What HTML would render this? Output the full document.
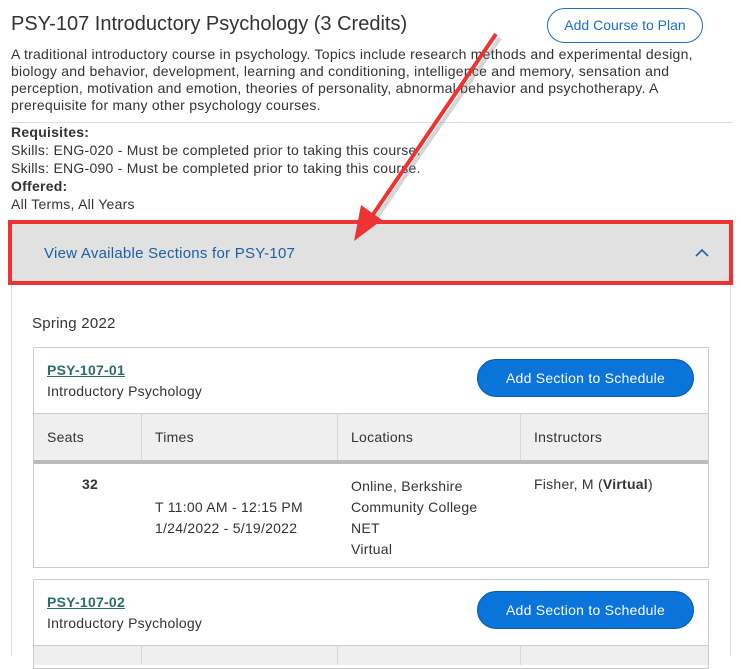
<!DOCTYPE html>
<html><head><meta charset="utf-8"><style>
*{margin:0;padding:0;box-sizing:border-box}
body{width:741px;height:656px;overflow:hidden;background:#fff;font-family:"Liberation Sans",sans-serif;color:#333;position:relative;font-size:14px;letter-spacing:0.25px}
.a{position:absolute;white-space:nowrap}
.btn{position:absolute;border-radius:20px;background:#0a74da;color:#fff;font-size:14px;text-align:center;border:1px solid #0659b0}
.lnk{color:#2a6e6a;font-weight:bold;text-decoration:underline;font-size:14px}
.th{position:absolute;background:#efefef;border-top:1px solid #ccc}
.vl{position:absolute;width:1px;background:#d6d6d6}
</style></head><body>
<div class="a" style="left:11px;top:13px;font-size:20px;color:#333;letter-spacing:0">PSY-107 Introductory Psychology (3 Credits)</div>
<div class="a" style="left:547px;top:8px;width:156px;height:35px;border:1px solid #1a6fc9;border-radius:18px;color:#1a6fc9;text-align:center;line-height:33px;font-size:14px;letter-spacing:0">Add Course to Plan</div>
<div class="a" style="left:11px;top:46px;line-height:17px;font-size:14px">A traditional introductory course in psychology. Topics include research methods and experimental design,<br>biology and behavior, development, learning and conditioning, intelligence and memory, sensation and<br>perception, motivation and emotion, theories of personality, abnormal behavior and psychotherapy. A<br>prerequisite for many other psychology courses.</div>
<div class="a" style="left:11px;top:122px;width:722px;height:1px;background:#ddd"></div>
<div class="a" style="left:11px;top:123px;line-height:18px;font-size:14px"><b>Requisites:</b><br>Skills: ENG-020 - Must be completed prior to taking this course.<br>Skills: ENG-090 - Must be completed prior to taking this course.<br><b>Offered:</b><br>All Terms, All Years</div>
<div class="a" style="left:11px;top:280px;width:720px;height:376px;border-left:1px solid #ddd;border-right:1px solid #ddd"></div>
<div class="a" style="left:8px;top:220px;width:725px;height:65px;border:4px solid #ee3333;background:#e1e1e1"></div>
<div class="a" style="left:44px;top:245px;font-size:15px;color:#1a5fa8">View Available Sections for PSY-107</div>
<svg class="a" style="left:694px;top:247px" width="16" height="12"><path d="M2 9 L8 3 L14 9" fill="none" stroke="#1a5fa8" stroke-width="1.6"/></svg>
<div class="a" style="left:32px;top:315px;font-size:15px">Spring 2022</div>

<div class="a" style="left:33px;top:347px;width:676px;height:221px;border:1px solid #ccc"></div>
<div class="a lnk" style="left:47px;top:362px">PSY-107-01</div>
<div class="a" style="left:47px;top:383px">Introductory Psychology</div>
<div class="btn" style="left:477px;top:359px;width:217px;height:38px;line-height:36px">Add Section to Schedule</div>
<div class="th" style="left:34px;top:413px;width:674px;height:47px"></div>
<div class="a" style="left:34px;top:460px;width:674px;height:4px;background:#bbb"></div>
<div class="vl" style="left:141px;top:413px;height:47px"></div>
<div class="vl" style="left:337px;top:413px;height:47px"></div>
<div class="vl" style="left:520px;top:413px;height:47px"></div>
<div class="a" style="left:47px;top:429px">Seats</div>
<div class="a" style="left:155px;top:429px">Times</div>
<div class="a" style="left:351px;top:429px">Locations</div>
<div class="a" style="left:534px;top:429px">Instructors</div>
<div class="a" style="left:82px;top:476px;font-weight:bold">32</div>
<div class="a" style="left:155px;top:497px;line-height:21px">T 11:00 AM - 12:15 PM<br>1/24/2022 - 5/19/2022</div>
<div class="a" style="left:351px;top:476px;line-height:21px">Online, Berkshire<br>Community College<br>NET<br>Virtual</div>
<div class="a" style="left:534px;top:476px">Fisher, M (<b>Virtual</b>)</div>

<div class="a" style="left:33px;top:579px;width:676px;height:90px;border:1px solid #ccc"></div>
<div class="a lnk" style="left:47px;top:594px">PSY-107-02</div>
<div class="a" style="left:47px;top:615px">Introductory Psychology</div>
<div class="btn" style="left:477px;top:591px;width:217px;height:38px;line-height:36px">Add Section to Schedule</div>
<div class="th" style="left:34px;top:645px;width:674px;height:20px"></div>
<div class="vl" style="left:141px;top:645px;height:20px"></div>
<div class="vl" style="left:337px;top:645px;height:20px"></div>
<div class="vl" style="left:520px;top:645px;height:20px"></div>

<svg class="a" style="left:0;top:0" width="741" height="656">
<line x1="498" y1="36" x2="373" y2="218" stroke="#888" stroke-width="4" opacity=".35" transform="translate(2,2)"/>
<line x1="496" y1="34" x2="372" y2="216" stroke="#ee3333" stroke-width="4"/>
<polygon points="354,241 361,205 382,220" fill="#ee3333"/>
</svg>
</body></html>
